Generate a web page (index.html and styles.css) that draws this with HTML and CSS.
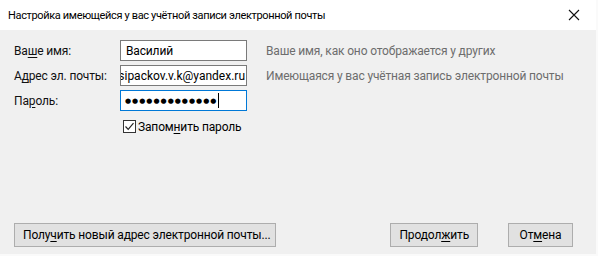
FILE: index.html
```html
<!DOCTYPE html>
<html lang="ru">
<head>
  <meta charset="UTF-8" />
  <title>Настройка учётной записи</title>
  <link rel="stylesheet" href="styles.css">
</head>
<body>
  <div class="window">
    <div class="titlebar">
      <span class="title">Настройка имеющейся у вас учётной записи электронной почты</span>
      <span class="close">
        <svg width="12" height="12" viewBox="0 0 12 12"><path d="M1 1 L11 11 M11 1 L1 11" stroke="#111" stroke-width="1.1" fill="none"/></svg>
      </span>
    </div>

    <div class="content">
      <div class="form">
        <label class="lbl">Ва<u>ш</u>е имя:</label>
        <div class="field">Василий</div>
        <div class="hint">Ваше имя, как оно отображается у других</div>

        <label class="lbl">А<u>д</u>рес эл. почты:</label>
        <div class="field scrolled"><span>vasipackov.v.k@yandex.ru</span></div>
        <div class="hint">Имеющаяся у вас учётная запись электронной почты</div>

        <label class="lbl">Па<u>р</u>оль:</label>
        <div class="field focused"><span class="dots">●●●●●●●●●●●●●</span><span class="caret"></span></div>
        <div class="hint"></div>

        <div></div>
        <div class="remember">
          <span class="check">
            <svg width="13" height="13" viewBox="0 0 13 13"><rect x="0.5" y="0.5" width="12" height="12" fill="#fff" stroke="#333"/><path d="M2.5 6.5 L5.2 9.3 L10.5 3.2" stroke="#222" stroke-width="1.2" fill="none"/></svg>
          </span>
          <span>Запом<u>н</u>ить пароль</span>
        </div>
        <div></div>
      </div>

      <div class="actions">
        <button class="btn wide">Полу<u>ч</u>ить новый адрес электронной почты...</button>
        <div class="right">
          <button class="btn">Продол<u>ж</u>ить</button>
          <button class="btn">От<u>м</u>ена</button>
        </div>
      </div>
    </div>
  </div>
</body>
</html>
```

FILE: styles.css
```css
* {
  box-sizing: border-box;
}

body {
  margin: 0;
  width: 598px;
  height: 256px;
  background: #fafafa;
  font-family: Roboto, 'Segoe UI', sans-serif;
  font-size: 12px;
  letter-spacing: -0.15px;
  color: #000;
  overflow: hidden;
}

u {
  text-decoration: underline;
  text-underline-offset: 2px;
}

.window {
  width: 596px;
  height: 254px;
  background: #f0f0f0;
  display: flex;
  flex-direction: column;
}

.titlebar {
  height: 30px;
  background: #fff;
  display: flex;
  align-items: center;
  justify-content: space-between;
  padding: 0 8px 0 8px;
}

.title {
  font-size: 11px;
  letter-spacing: -0.35px;
}

.close {
  width: 16px;
  height: 16px;
  display: flex;
  align-items: center;
  justify-content: center;
  margin-right: 6px;
}

.content {
  flex: 1;
  display: flex;
  flex-direction: column;
  justify-content: space-between;
  padding: 10px 0 7px 14px;
}

.form {
  display: grid;
  grid-template-columns: 106px 127px 1fr;
  grid-auto-rows: 21px;
  row-gap: 4px;
  align-items: center;
}

.lbl {
  color: #111;
}

.field {
  height: 21px;
  border: 1px solid #7a7a7a;
  background: #fff;
  padding: 0 5px;
  display: flex;
  align-items: center;
  white-space: nowrap;
  overflow: hidden;
}

.field.scrolled {
  justify-content: flex-end;
  padding: 0 1px 0 0;
  letter-spacing: 0;
}

.field.focused {
  border-color: #0078d7;
  padding-left: 4px;
}

.dots {
  font-family: 'DejaVu Sans', sans-serif;
  font-size: 7px;
  letter-spacing: 1px;
}

.caret {
  display: inline-block;
  width: 1px;
  height: 15px;
  background: #000;
  margin-left: 1px;
}

.hint {
  color: #6d6d6d;
  padding-left: 19px;
  white-space: nowrap;
}

.remember {
  grid-column: 2 / 4;
  display: flex;
  align-items: center;
  gap: 2px;
  padding-left: 3px;
  margin-top: 2px;
}

.check {
  display: flex;
  width: 13px;
  height: 13px;
}

.actions {
  display: flex;
  justify-content: space-between;
  align-items: center;
  padding-right: 23px;
}

.right {
  display: flex;
  gap: 30px;
}

.btn {
  font-family: Roboto, 'Segoe UI', sans-serif;
  font-size: 12px;
  letter-spacing: -0.15px;
  height: 24px;
  min-width: 65px;
  padding: 0 8px;
  background: #e1e1e1;
  border: 1px solid #adadad;
  color: #000;
  white-space: nowrap;
}

.btn.wide {
  width: 262px;
}
```
